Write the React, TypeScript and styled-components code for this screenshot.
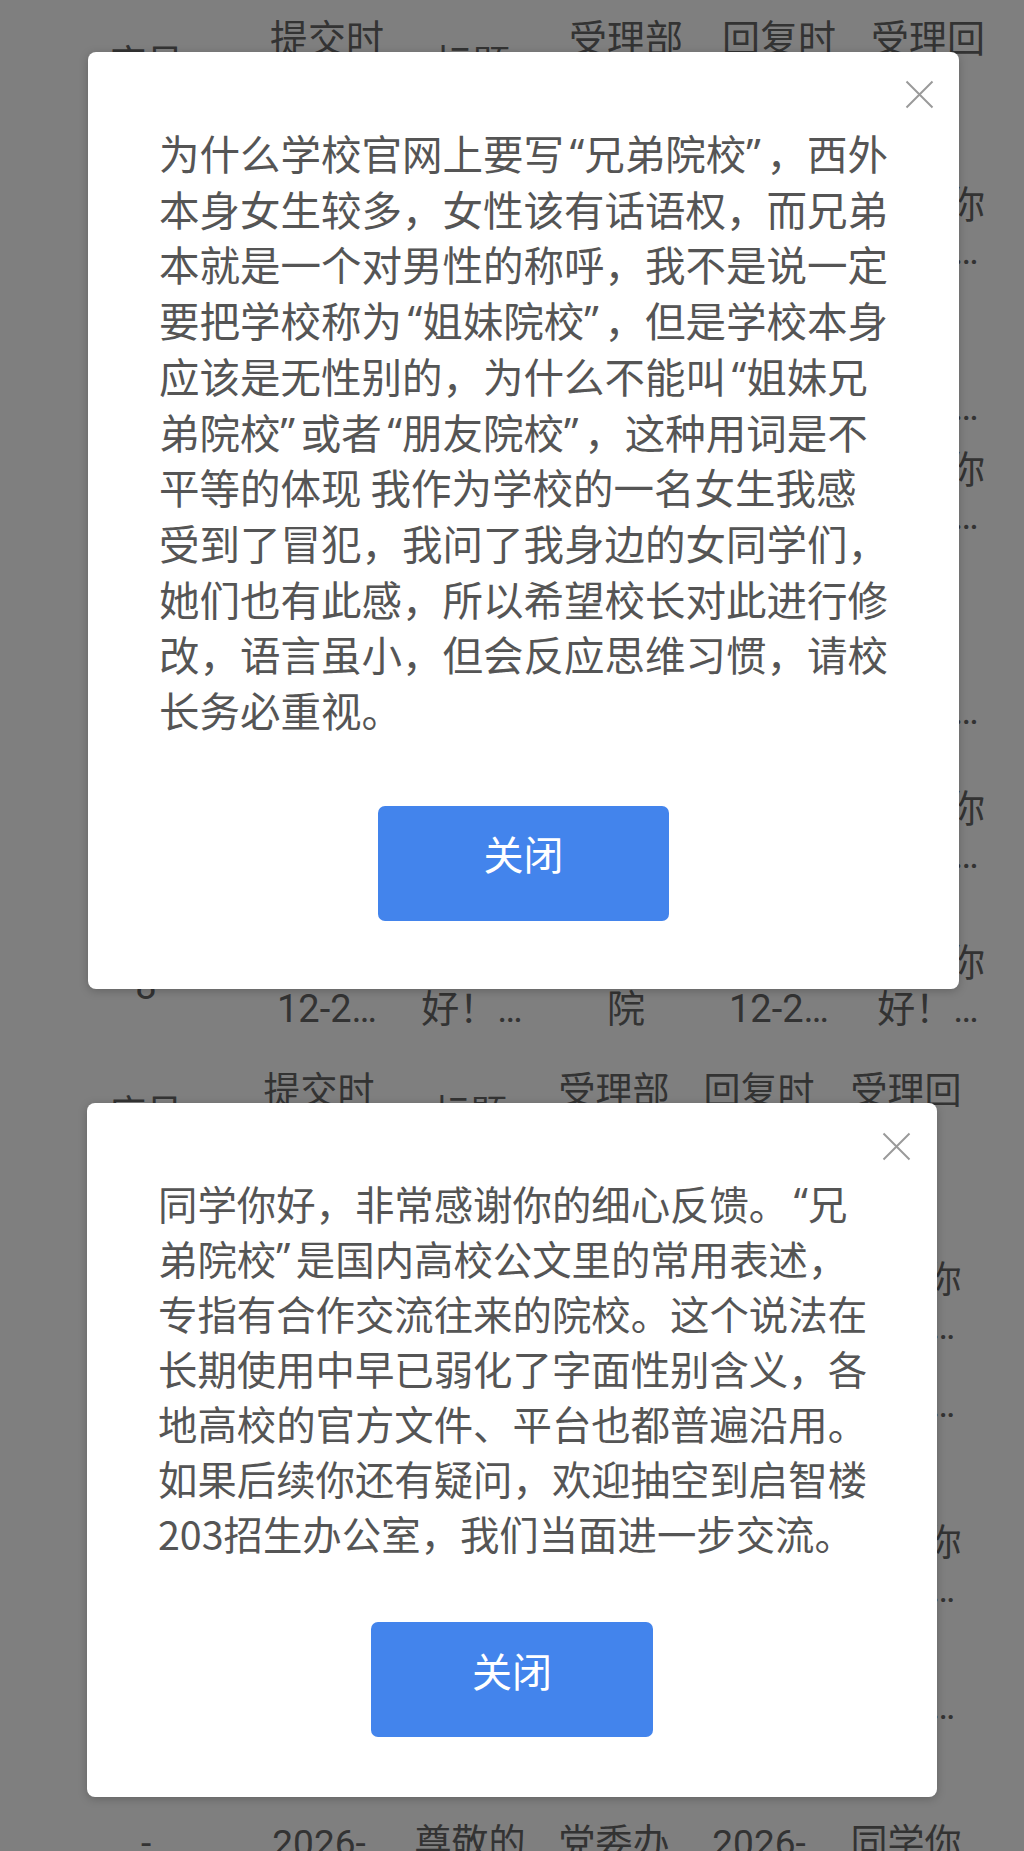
import React from "react";
import styled, { createGlobalStyle } from "styled-components";

const GlobalStyle = createGlobalStyle`
  html, body {
    margin: 0;
    padding: 0;
    background: #808080;
  }
  body {
    font-family: "Noto Sans CJK SC", "Noto Sans", sans-serif;
  }
`;

// column widths of the list page behind the dialog (first entry is the left gutter)
const topCols = [56, 180, 182, 108, 200, 106, 192];
const bottomCols = [56, 180, 166, 136, 152, 138, 156];

// h: row height, pads: top offset of each cell's text
type Row = { h: number; pads: number[]; cells: string[][] };

const head = [["序号"], ["提交时", "间"], ["标题"], ["受理部", "门"], ["回复时", "间"], ["受理回", "复"]];
const fill = (n: number) => Array(6).fill(n);

const topRows: Row[] = [
  { h: 124, pads: [41, 16, 41, 16, 16, 16], cells: head },
  { h: 214, pads: fill(58), cells: [[], [], [], [], [], ["同学你", "好！…"]] },
  { h: 94, pads: fill(46), cells: [[], [], [], [], [], ["好！…"]] },
  { h: 122, pads: fill(15), cells: [[], [], [], [], [], ["同学你", "好！…"]] },
  { h: 202, pads: fill(134), cells: [[], [], [], [], [], ["好！…"]] },
  { h: 152, pads: fill(30), cells: [[], [], [], [], [], ["同学你", "好！…"]] },
  {
    h: 148,
    pads: [55, 32, 32, 32, 32, 32],
    cells: [["8"], ["", "12-2…"], ["", "好！…"], ["", "院"], ["", "12-2…"], ["同学你", "好！…"]],
  },
];

const bottomRows: Row[] = [
  { h: 140, pads: [52, 29, 52, 29, 29, 29], cells: head },
  { h: 190, pads: fill(78), cells: [[], [], [], [], [], ["同学你", "好！…"]] },
  { h: 110, pads: fill(12), cells: [[], [], [], [], [], ["好！…"]] },
  { h: 170, pads: fill(41), cells: [[], [], [], [], [], ["同学你", "好！…"]] },
  { h: 137, pads: fill(34), cells: [[], [], [], [], [], ["好！…"]] },
  {
    h: 160,
    pads: fill(34),
    cells: [["-"], ["2026-"], ["尊敬的"], ["党委办"], ["2026-"], ["同学你"]],
  },
];

const Screen = styled.section<{ $h: number }>`
  position: relative;
  height: ${(p) => p.$h}px;
  overflow: hidden;
  background: #ffffff;
`;

const Table = styled.div<{ $cols: string; $size: number }>`
  display: grid;
  grid-template-columns: ${(p) => p.$cols};
  color: #666666;
  font-family: Roboto, "Noto Sans CJK SC", sans-serif;
  font-size: ${(p) => p.$size}px;
  line-height: 46px;
`;

const TableRow = styled.div<{ $h: number }>`
  display: contents;
  & > div {
    height: ${(p) => p.$h}px;
  }
`;

const Cell = styled.div<{ $pad: number }>`
  box-sizing: border-box;
  display: flex;
  flex-direction: column;
  align-items: center;
  padding-top: ${(p) => p.$pad}px;
  white-space: nowrap;
  span {
    height: 46px;
  }
`;

const Mask = styled.div<{ $top: number; $left: number }>`
  position: absolute;
  inset: 0;
  background: rgba(0, 0, 0, 0.5);
  display: flex;
  align-items: flex-start;
  padding: ${(p) => p.$top}px 0 0 ${(p) => p.$left}px;
`;

const Dialog = styled.div<{ $w: number; $h: number; $padTop: number; $size: number; $lh: number }>`
  position: relative;
  box-sizing: border-box;
  width: ${(p) => p.$w}px;
  height: ${(p) => p.$h}px;
  padding: ${(p) => p.$padTop}px 40px 0 71px;
  background: #ffffff;
  border-radius: 8px;
  box-shadow: 0 2px 10px rgba(0, 0, 0, 0.22);
  display: flex;
  flex-direction: column;
  font-size: ${(p) => p.$size}px;
  line-height: ${(p) => p.$lh}px;
`;

const CloseIcon = styled.button<{ $top: number; $right: number }>`
  position: absolute;
  top: ${(p) => p.$top}px;
  right: ${(p) => p.$right}px;
  width: 29px;
  height: 29px;
  padding: 0;
  border: none;
  background: transparent;
  cursor: pointer;
  svg {
    display: block;
  }
`;

const Message = styled.p<{ $lh: number }>`
  margin: 0;
  height: ${(p) => p.$lh}px;
  color: #555555;
  white-space: nowrap;
`;

// curly quotes take half a character cell, as on the phone
const Quote = styled.span<{ $open?: boolean }>`
  display: inline-block;
  width: 0.5em;
  vertical-align: top;
  font-family: "Noto Sans", sans-serif;
  text-align: ${(p) => (p.$open ? "right" : "left")};
`;

const Actions = styled.div<{ $gap: number }>`
  display: flex;
  justify-content: center;
  margin-top: ${(p) => p.$gap}px;
  margin-left: -31px;
`;

const CloseButton = styled.button<{ $w: number }>`
  width: ${(p) => p.$w}px;
  height: 115px;
  padding: 0 0 20px;
  border: none;
  border-radius: 7px;
  background: #4384ec;
  color: #ffffff;
  font-family: "Noto Sans CJK SC", sans-serif;
  font-size: 40px;
  cursor: pointer;
`;

function Cross() {
  return (
    <svg width="29" height="29" viewBox="0 0 29 29">
      <path d="M1.5 1.5 L27.5 27.5 M27.5 1.5 L1.5 27.5" stroke="#9a9a9a" strokeWidth="2" fill="none" />
    </svg>
  );
}

function Background({ rows, cols, size }: { rows: Row[]; cols: number[]; size: number }) {
  const template = cols.map((c) => `${c}px`).join(" ");
  return (
    <Table $cols={template} $size={size}>
      {rows.map((row, i) => (
        <TableRow key={i} $h={row.h}>
          <div />
          {row.cells.map((lines, j) => (
            <Cell key={j} $pad={row.pads[j]}>
              {lines.map((l, k) => (
                <span key={k}>{l}</span>
              ))}
            </Cell>
          ))}
        </TableRow>
      ))}
    </Table>
  );
}

const question = [
  "为什么学校官网上要写“兄弟院校”，西外",
  "本身女生较多，女性该有话语权，而兄弟",
  "本就是一个对男性的称呼，我不是说一定",
  "要把学校称为“姐妹院校”，但是学校本身",
  "应该是无性别的，为什么不能叫“姐妹兄",
  "弟院校”或者“朋友院校”，这种用词是不",
  "平等的体现 我作为学校的一名女生我感",
  "受到了冒犯，我问了我身边的女同学们，",
  "她们也有此感，所以希望校长对此进行修",
  "改，语言虽小，但会反应思维习惯，请校",
  "长务必重视。",
];

const reply = [
  "同学你好，非常感谢你的细心反馈。“兄",
  "弟院校”是国内高校公文里的常用表述，",
  "专指有合作交流往来的院校。这个说法在",
  "长期使用中早已弱化了字面性别含义，各",
  "地高校的官方文件、平台也都普遍沿用。",
  "如果后续你还有疑问，欢迎抽空到启智楼",
  "203招生办公室，我们当面进一步交流。",
];

function Line({ text }: { text: string }) {
  const parts = text.split(/([“”])/);
  return (
    <>
      {parts.map((p, i) =>
        p === "“" ? (
          <Quote key={i} $open>
            “
          </Quote>
        ) : p === "”" ? (
          <Quote key={i}>”</Quote>
        ) : (
          <React.Fragment key={i}>{p}</React.Fragment>
        )
      )}
    </>
  );
}

function Lines({ lines, lh }: { lines: string[]; lh: number }) {
  return (
    <Message $lh={lh * lines.length}>
      {lines.map((l, i) => (
        <React.Fragment key={i}>
          <Line text={l} />
          {i < lines.length - 1 && <br />}
        </React.Fragment>
      ))}
    </Message>
  );
}

export default function App() {
  return (
    <>
      <GlobalStyle />
      <Screen $h={1040}>
        <Background rows={topRows} cols={topCols} size={38} />
        <Mask $top={52} $left={88}>
          <Dialog $w={871} $h={937} $padTop={73} $size={40.5} $lh={55.7}>
            <CloseIcon $top={28} $right={25} aria-label="close">
              <Cross />
            </CloseIcon>
            <Lines lines={question} lh={55.7} />
            <Actions $gap={68}>
              <CloseButton $w={291}>关闭</CloseButton>
            </Actions>
          </Dialog>
        </Mask>
      </Screen>
      <Screen $h={811}>
        <Background rows={bottomRows} cols={bottomCols} size={37} />
        <Mask $top={63} $left={87}>
          <Dialog $w={850} $h={694} $padTop={72} $size={39.4} $lh={55}>
            <CloseIcon $top={29} $right={26} aria-label="close">
              <Cross />
            </CloseIcon>
            <Lines lines={reply} lh={55} />
            <Actions $gap={62}>
              <CloseButton $w={282}>关闭</CloseButton>
            </Actions>
          </Dialog>
        </Mask>
      </Screen>
    </>
  );
}
